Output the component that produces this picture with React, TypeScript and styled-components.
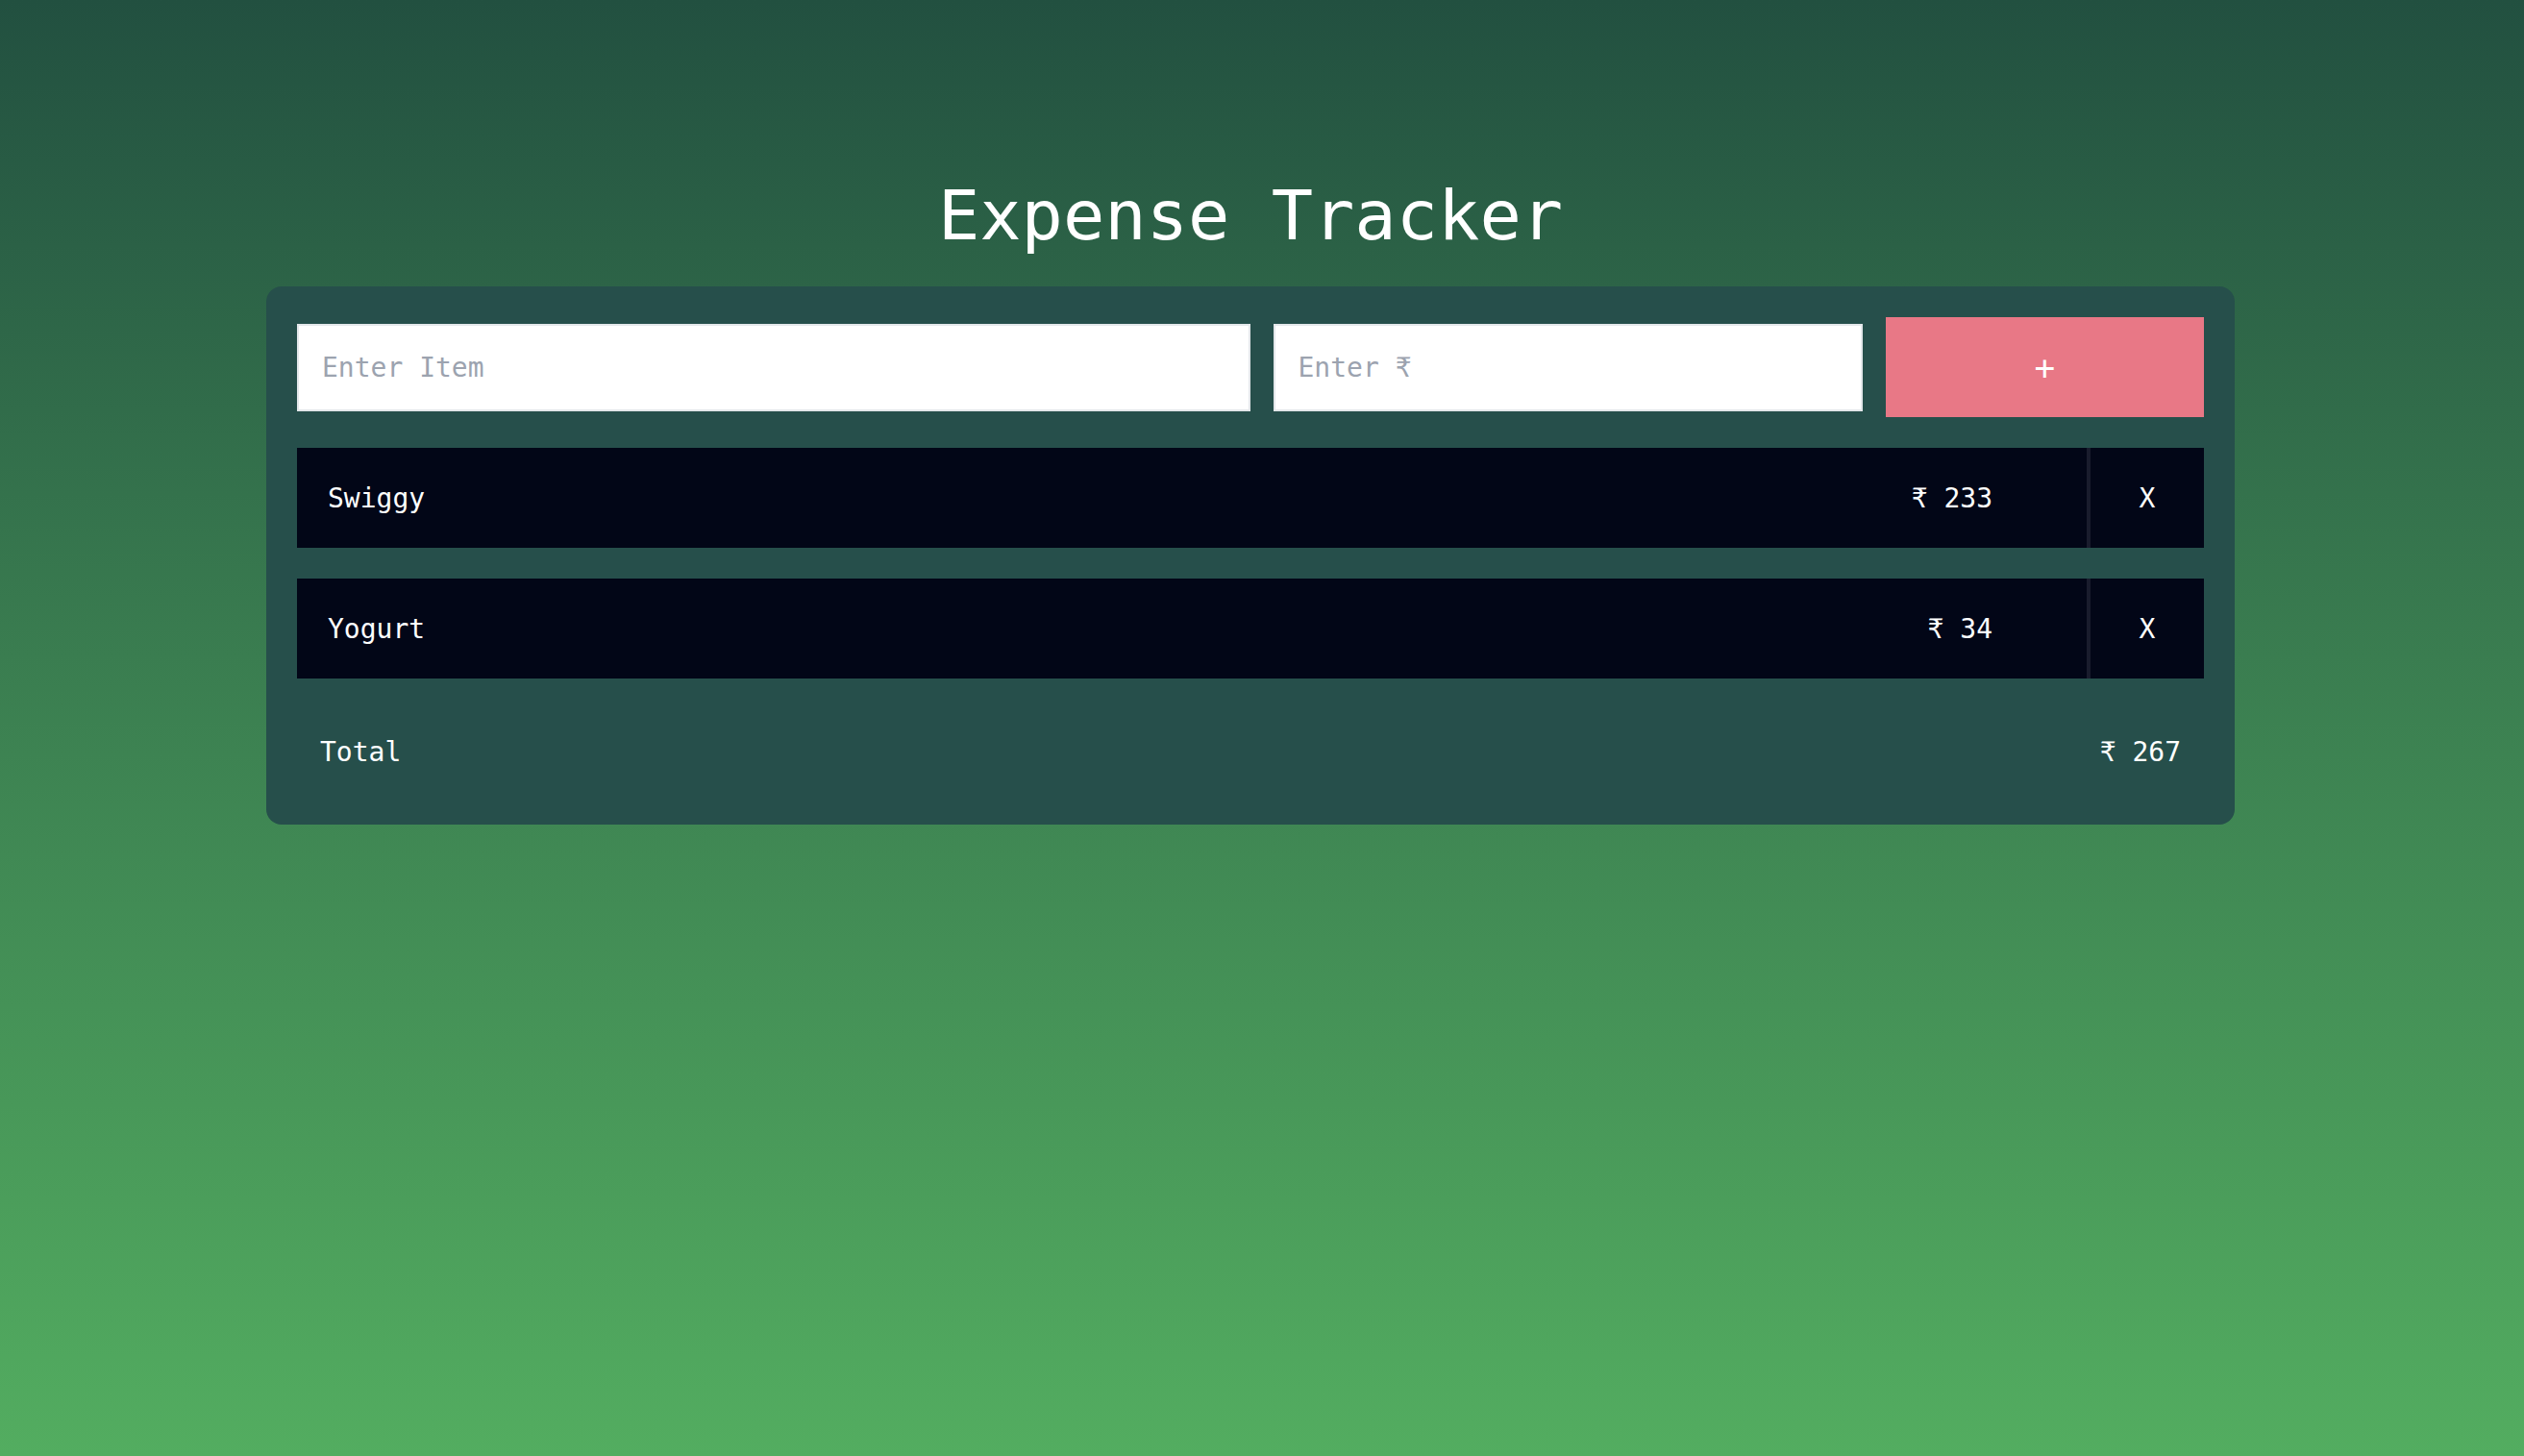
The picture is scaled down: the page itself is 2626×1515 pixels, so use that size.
import React, { useState } from "react"
import styled, { createGlobalStyle } from "styled-components"

const GlobalStyle = createGlobalStyle`
  * {
    box-sizing: border-box;
  }
  body {
    margin: 0;
    font-family: "DejaVu Sans Mono", "Liberation Mono", monospace;
  }
`

const Page = styled.main`
  min-height: 100vh;
  background: linear-gradient(180deg, #225040 0%, #3a7d50 45%, #53ad60 100%);
  padding: 182px 24px 0 0;
  display: flex;
  flex-direction: column;
  align-items: center;
`

const Title = styled.h1`
  margin: 0 0 32px;
  font-size: 72px;
  font-weight: 400;
  line-height: 84px;
  color: #ffffff;
`

const Card = styled.section`
  width: 2048px;
  background: #264f4b;
  border-radius: 16px;
  padding: 32px;
  display: flex;
  flex-direction: column;
  gap: 32px;
`

const Form = styled.form`
  display: grid;
  grid-template-columns: 991fr 613fr 331fr;
  column-gap: 24px;
  align-items: center;
  height: 104px;
`

const Input = styled.input`
  height: 91px;
  width: 100%;
  border: 2px solid #e3e7ea;
  background: #ffffff;
  padding: 0 24px;
  font-family: inherit;
  font-size: 28px;
  color: #111827;
  outline: none;

  &::placeholder {
    color: #9ca3af;
  }
`

const AddButton = styled.button`
  height: 104px;
  border: 0;
  background: #e87886;
  color: #ffffff;
  font-family: inherit;
  font-size: 36px;
  cursor: pointer;
`

const Row = styled.div`
  display: flex;
  align-items: center;
  height: 104px;
  background: #020617;
  color: #ffffff;
  font-size: 28px;
`

const ItemName = styled.span`
  flex: 1;
  padding-left: 32px;
`

const ItemPrice = styled.span`
  padding-right: 98px;
`

const DeleteButton = styled.button`
  width: 122px;
  height: 100%;
  border: 0;
  border-left: 4px solid #191c2d;
  background: transparent;
  color: #ffffff;
  font-family: inherit;
  font-size: 28px;
  cursor: pointer;
`

const Total = styled.div`
  display: flex;
  justify-content: space-between;
  align-items: center;
  height: 88px;
  padding: 0 24px;
  color: #ffffff;
  font-size: 28px;
`

type Expense = {
  id: number
  name: string
  price: number
}

export default function App() {
  const [items, setItems] = useState<Expense[]>([
    { id: 1, name: "Swiggy", price: 233 },
    { id: 2, name: "Yogurt", price: 34 },
  ])
  const [name, setName] = useState("")
  const [price, setPrice] = useState("")

  const total = items.reduce((sum, item) => sum + item.price, 0)

  function handleAdd(e: React.FormEvent) {
    e.preventDefault()
    if (!name || !price) return
    setItems([...items, { id: Date.now(), name, price: Number(price) }])
    setName("")
    setPrice("")
  }

  return (
    <>
      <GlobalStyle />
      <Page>
        <Title>Expense Tracker</Title>
        <Card>
          <Form onSubmit={handleAdd}>
            <Input
              placeholder="Enter Item"
              value={name}
              onChange={(e) => setName(e.target.value)}
            />
            <Input
              placeholder="Enter ₹"
              type="number"
              value={price}
              onChange={(e) => setPrice(e.target.value)}
            />
            <AddButton type="submit">+</AddButton>
          </Form>
          {items.map((item) => (
            <Row key={item.id}>
              <ItemName>{item.name}</ItemName>
              <ItemPrice>₹ {item.price}</ItemPrice>
              <DeleteButton
                type="button"
                onClick={() => setItems(items.filter((i) => i.id !== item.id))}
              >
                X
              </DeleteButton>
            </Row>
          ))}
          <Total>
            <span>Total</span>
            <span>₹ {total}</span>
          </Total>
        </Card>
      </Page>
    </>
  )
}
